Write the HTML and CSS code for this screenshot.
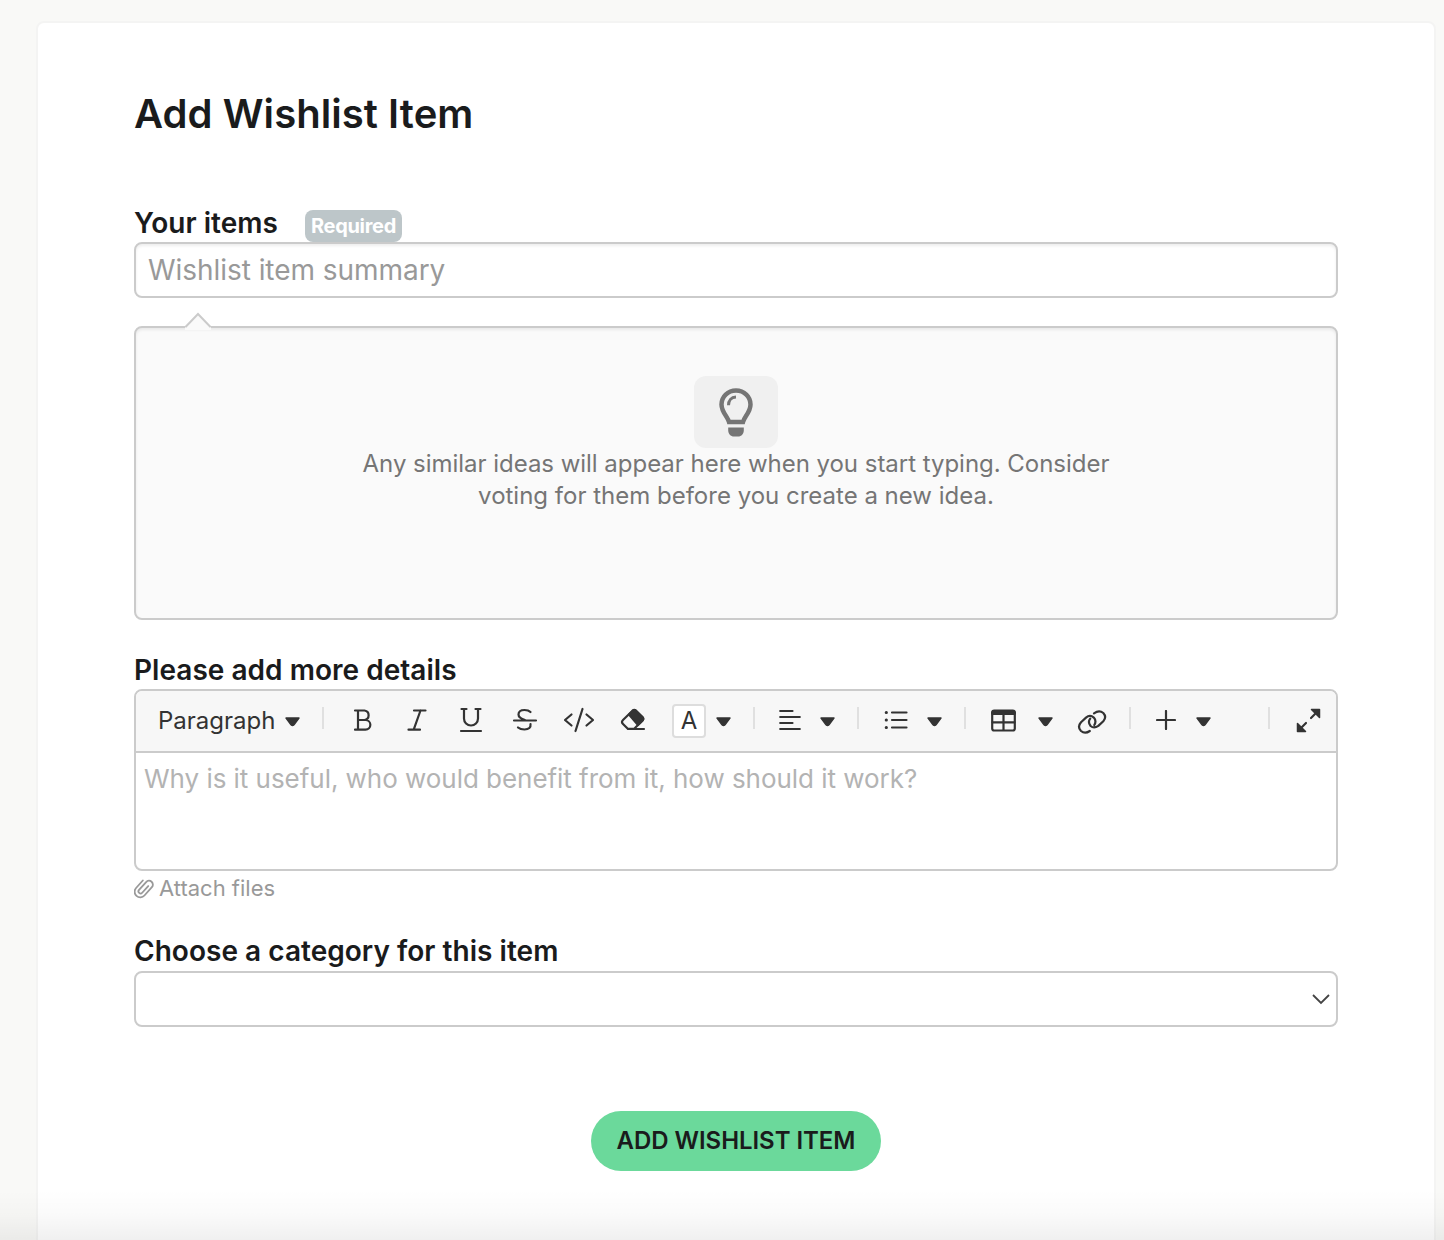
FILE: index.html
```html
<!DOCTYPE html>
<html lang="en">
<head>
<meta charset="utf-8">
<title>Add Wishlist Item</title>
<link rel="stylesheet" href="styles.css">
</head>
<body>
<main class="card">
  <h1 class="title"><span>Add Wishlist Item</span></h1>

  <div class="label label-items"><span class="label-text">Your items</span><span class="badge"><span>Required</span></span></div>
  <div class="field"><span class="field-placeholder">Wishlist item summary</span></div>

  <section class="similar">
    <svg class="similar-arrow" viewBox="0 0 28 18"><path d="M1 15.5 14 2 27 15.5V18H1z" fill="#fafafa"/><path d="M1.500 15 14 2 26.500 15" fill="none" stroke="#cbcbcb" stroke-width="2"/></svg>
    <div class="bulb">
      <svg width="34" height="50" viewBox="0 0 34 50">
        <path d="M17 2.500C8.800 2.500 2.500 8.600 2.500 16.500c0 5 2.300 8.300 4.800 12 1.300 2 2.200 3.700 2.700 5.500h14c.5-1.800 1.400-3.500 2.700-5.500 2.500-3.700 4.800-7 4.800-12C31.500 8.600 25.200 2.500 17 2.500z" fill="none" stroke="#757575" stroke-width="4.500"/>
        <path d="M9.500 17.300c0-4.700 2.700-8 7.500-8.200" fill="none" stroke="#757575" stroke-width="3"/>
        <path d="M9.200 39.500h15.600v2.500c0 4-2.300 6.500-5.800 6.500h-4c-3.500 0-5.800-2.500-5.800-6.500z" fill="#757575"/>
      </svg>
    </div>
    <p class="similar-text"><span class="line-one">Any similar ideas will appear here when you start typing. Consider</span><br><span class="line-two">voting for them before you create a new idea.</span></p>
  </section>

  <div class="label label-details"><span class="label-text">Please add more details</span></div>
  <div class="editor">
    <div class="toolbar">
      <div class="group group-style"><span class="style-name">Paragraph</span><svg class="caret" viewBox="0 0 15 10"><path d="M1 1h13L9 7.800Q7.500 9.300 6 7.800z"/></svg></div>
      <i class="sep"></i>
      <div class="group group-format">
        <span class="cell"><svg width="24" height="26" viewBox="0 0 24 26"><path d="M4 3.500H13.500a4.800 4.800 0 0 1 0 9.500H7M13.500 13h1a4.800 4.800 0 0 1 0 9.700H4M7 3.500v19.200"/></svg></span>
        <span class="cell"><svg width="24" height="26" viewBox="0 0 24 26"><path d="M9 3.500h11.500M3.500 22.700H15M15.500 3.500 8.700 22.700"/></svg></span>
        <span class="cell"><svg width="24" height="28" viewBox="0 0 24 28"><path d="M2.500 3h5M16.500 3h5M5 3v9.500a7 7 0 0 0 14 0V3M2 25h20"/></svg></span>
        <span class="cell"><svg width="26" height="26" viewBox="0 0 26 26"><path d="M18.500 5C17 3.500 15 3 12.500 3 9 3 6.500 4.500 6.500 7.500c0 3.300 3 4.500 6.500 5.500M2 13.500h22M18.500 17c.5 3.500-1.500 5.500-6 5.500-2.700 0-5-.7-6.500-2"/></svg></span>
        <span class="cell"><svg width="32" height="28" viewBox="0 0 32 28"><path d="M8.500 8.500 2 14l6.500 5.500M23.500 8.500 30 14l-6.500 5.500M19.500 3l-7 22"/></svg></span>
        <span class="cell"><svg width="26" height="24" viewBox="0 0 26 24"><path d="M7.800 20.800 3 16q-2-2 0-4l9.500-9.300q1.800-1.500 3.600 0l6.400 6.400q1.600 1.800 0 3.400l-8.300 8.300zM7.800 21H24"/><path d="M9 6.500 12.600 3q1.700-1.500 3.400 0l6.400 6.300q1.700 1.700 0 3.400L18 17z" fill="#333"/></svg></span>
      </div>
      <div class="group group-color"><span class="swatch"><span>A</span></span><svg class="caret" viewBox="0 0 15 10"><path d="M1 1h13L9 7.800Q7.500 9.300 6 7.800z"/></svg></div>
      <i class="sep"></i>
      <div class="group group-align"><svg width="22" height="22" viewBox="0 0 22 22"><path d="M1.200 2h12.300M1.200 8h19.600M1.200 14h12.300M1.200 20h19.600"/></svg><svg class="caret" viewBox="0 0 15 10"><path d="M1 1h13L9 7.800Q7.500 9.300 6 7.800z"/></svg></div>
      <i class="sep"></i>
      <div class="group group-list"><svg width="24" height="20" viewBox="0 0 24 20"><path d="M8 2.500h14.500M8 10h14.500M8 17.500h14.500"/><path d="M2.200 2.500h.2M2.200 10h.2M2.200 17.500h.2" stroke-width="3"/></svg><svg class="caret" viewBox="0 0 15 10"><path d="M1 1h13L9 7.800Q7.500 9.300 6 7.800z"/></svg></div>
      <i class="sep"></i>
      <div class="group group-insert"><svg width="25" height="23" viewBox="0 0 25 23"><rect x="1.200" y="1.500" width="22.600" height="20" rx="2"/><path d="M1.500 4.500h22M12.500 6v15M1.500 13.300h22"/><path d="M2 4h21" stroke-width="4"/></svg><svg class="caret" viewBox="0 0 15 10"><path d="M1 1h13L9 7.800Q7.500 9.300 6 7.800z"/></svg><svg class="link" width="30" height="26" viewBox="0 0 30 26"><path d="M12.800 22Q8 25.300 4 22 0 17.800 4 13.200L9 8.600Q13 5.200 16.800 8.600 19.800 12 17.300 16M17 4.300Q22.200.7 26.300 4 30 8 26.300 12.200L21.300 16.900Q17 20 13.600 17 10.500 13.300 13.200 9.700"/></svg></div>
      <i class="sep"></i>
      <div class="group group-more"><svg width="20" height="20" viewBox="0 0 20 20"><path d="M10 1v18M1 10h18"/></svg><svg class="caret" viewBox="0 0 15 10"><path d="M1 1h13L9 7.800Q7.500 9.300 6 7.800z"/></svg></div>
      <i class="sep"></i>
      <svg class="expand" width="25" height="25" viewBox="0 0 25 25"><path d="m15 10 5.500-5.500M10 15l-5.500 5.500"/><path d="M15.500 1.500h8v8zM1.500 15.500v8h8z" fill="#333" stroke-width="1.500"/></svg>
    </div>
    <div class="editor-body"><span class="editor-placeholder">Why is it useful, who would benefit from it, how should it work?</span></div>
  </div>
  <div class="attach"><svg width="20" height="24" viewBox="0 0 20 24"><path transform="translate(9.800 11.800) rotate(42) scale(1.060)" d="M2-4V4.500a2 2 0 0 1-4 0V-5.500a3.600 3.600 0 0 1 7.300 0V5a5.300 5.300 0 0 1-10.600 0V-4.500"/></svg><span class="attach-text">Attach files</span></div>

  <div class="label label-category"><span class="label-text">Choose a category for this item</span></div>
  <div class="field select"><svg width="20" height="12" viewBox="0 0 20 12"><path d="m2 2 8 8 8-8"/></svg></div>

  <button class="submit"><span>ADD WISHLIST ITEM</span></button>
</main>
<div class="fade"></div>
</body>
</html>
```

FILE: styles.css
```css
* { box-sizing: border-box; }

body {
  margin: 0;
  height: 1240px;
  overflow: hidden;
  position: relative;
  padding: 21px 8px 0 36px;
  background: #f9f9f7;
  font-family: Inter, "Liberation Sans", sans-serif;
  color: #1a1b1c;
}

.card {
  height: 1260px;
  padding: 0 96px;
  display: flex;
  flex-direction: column;
  background: #fff;
  border: 2px solid #f4f4f3;
  border-radius: 8px;
}

svg { display: block; flex: none; }
span { white-space: nowrap; }

.title {
  margin: 66px 0 0;
  font-size: 40px;
  line-height: 50px;
  font-weight: 600;
  letter-spacing: .06px;
}

.label {
  display: flex;
  font-size: 28px;
  line-height: 36px;
  font-weight: 600;
  letter-spacing: .03px;
}
.label-items { margin-top: 66px; height: 37px; }
.label-details { margin-top: 32px; height: 37px; }
.label-category { margin-top: 29px; height: 38px; }

.badge {
  width: 97px;
  height: 32px;
  margin: 5px 0 0 27px;
  border-radius: 8px;
  background: #bdc6c9;
  color: #fff;
  font-size: 20px;
  line-height: 32px;
  font-weight: 700;
  letter-spacing: -.3px;
  text-align: center;
}

.field {
  height: 56px;
  flex: none;
  padding-left: 12px;
  border: 2px solid #cbcbcb;
  border-radius: 8px;
  box-shadow: inset 0 2px 3px rgba(0, 0, 0, .07);
  color: #999;
  font-size: 28px;
  line-height: 53px;
  letter-spacing: -.05px;
}

.similar {
  position: relative;
  flex: none;
  height: 294px;
  margin-top: 28px;
  padding-top: 48px;
  display: flex;
  flex-direction: column;
  align-items: center;
  border: 2px solid #cbcbcb;
  border-radius: 8px;
  background: #fafafa;
  box-shadow: inset 0 2px 3px rgba(0, 0, 0, .07);
}
.similar-arrow {
  position: absolute;
  left: 48px;
  top: -16px;
  width: 28px;
  height: 18px;
}
.bulb {
  width: 84px;
  height: 72px;
  display: flex;
  justify-content: center;
  padding-top: 12px;
  border-radius: 12px;
  background: #f0f0f0;
}
.similar-text {
  margin: 0;
  color: #757575;
  font-size: 24px;
  line-height: 32px;
  text-align: center;
}
.line-one { letter-spacing: -.03px; }

.editor {
  height: 182px;
  flex: none;
  border: 2px solid #cbcbcb;
  border-radius: 8px;
  overflow: hidden;
}
.toolbar {
  height: 62px;
  padding-bottom: 2px;
  display: flex;
  align-items: center;
  background: #f7f7f7;
  border-bottom: 2px solid #cbcbcb;
  color: #333;
}
.toolbar svg {
  fill: none;
  stroke: #333;
  stroke-width: 2.2;
  stroke-linecap: round;
  stroke-linejoin: round;
}
.toolbar .caret {
  width: 15px;
  height: 10px;
  fill: #333;
  stroke-width: 1.4;
  margin-top: 3px;
}
.sep {
  flex: none;
  width: 2px;
  height: 22px;
  margin-bottom: 5px;
  background: #e0e0e0;
}
.group { display: flex; align-items: center; flex: none; }
.group-style { width: 186px; padding-left: 22px; justify-content: space-between; padding-right: 22px; font-size: 24px; }
.group-format { padding-left: 12px; }
.cell { width: 54px; display: flex; justify-content: center; }
.group-color { width: 93px; padding-left: 12px; gap: 10px; }
.swatch {
  width: 34px;
  height: 34px;
  margin-top: 2px;
  border: 2px solid #ddd;
  border-radius: 4px;
  background: #fff;
  font-size: 24px;
  line-height: 30px;
  text-align: center;
}
.group-align { width: 102px; padding-left: 24px; gap: 19px; }
.group-list { width: 105px; padding-left: 25px; gap: 19px; }
.group-insert { width: 163px; padding-left: 25px; gap: 22px; }
.link { margin: 4px 0 0 2px; }
.group-more { width: 137px; padding-left: 25px; gap: 20px; }
.expand { margin-left: 26px; }

.editor-body {
  padding: 8px;
  color: #b3b3b3;
  font-size: 26px;
  line-height: 36px;
  letter-spacing: -.04px;
}

.attach {
  height: 32px;
  margin-top: 1px;
  display: flex;
  align-items: center;
  gap: 5px;
  color: #999;
  font-size: 22px;
}
.attach svg { fill: none; stroke: #999; stroke-width: 1.7; stroke-linecap: round; }

.select {
  display: flex;
  align-items: center;
  justify-content: flex-end;
  padding-right: 5px;
  box-shadow: none;
}
.select svg { fill: none; stroke: #444; stroke-width: 1.8; }

.submit {
  width: 290px;
  height: 60px;
  flex: none;
  align-self: center;
  margin-top: 84px;
  padding: 0 0 2px;
  border: 0;
  border-radius: 30px;
  background: #6bd99b;
  color: #1a1b1c;
  font: 600 24px Inter, sans-serif;
  letter-spacing: -.05px;
}

.fade {
  position: absolute;
  left: 0;
  right: 0;
  bottom: 0;
  height: 50px;
  background: linear-gradient(rgba(0, 0, 0, 0), rgba(0, 0, 0, .02) 50%, rgba(0, 0, 0, .06));
}
```
